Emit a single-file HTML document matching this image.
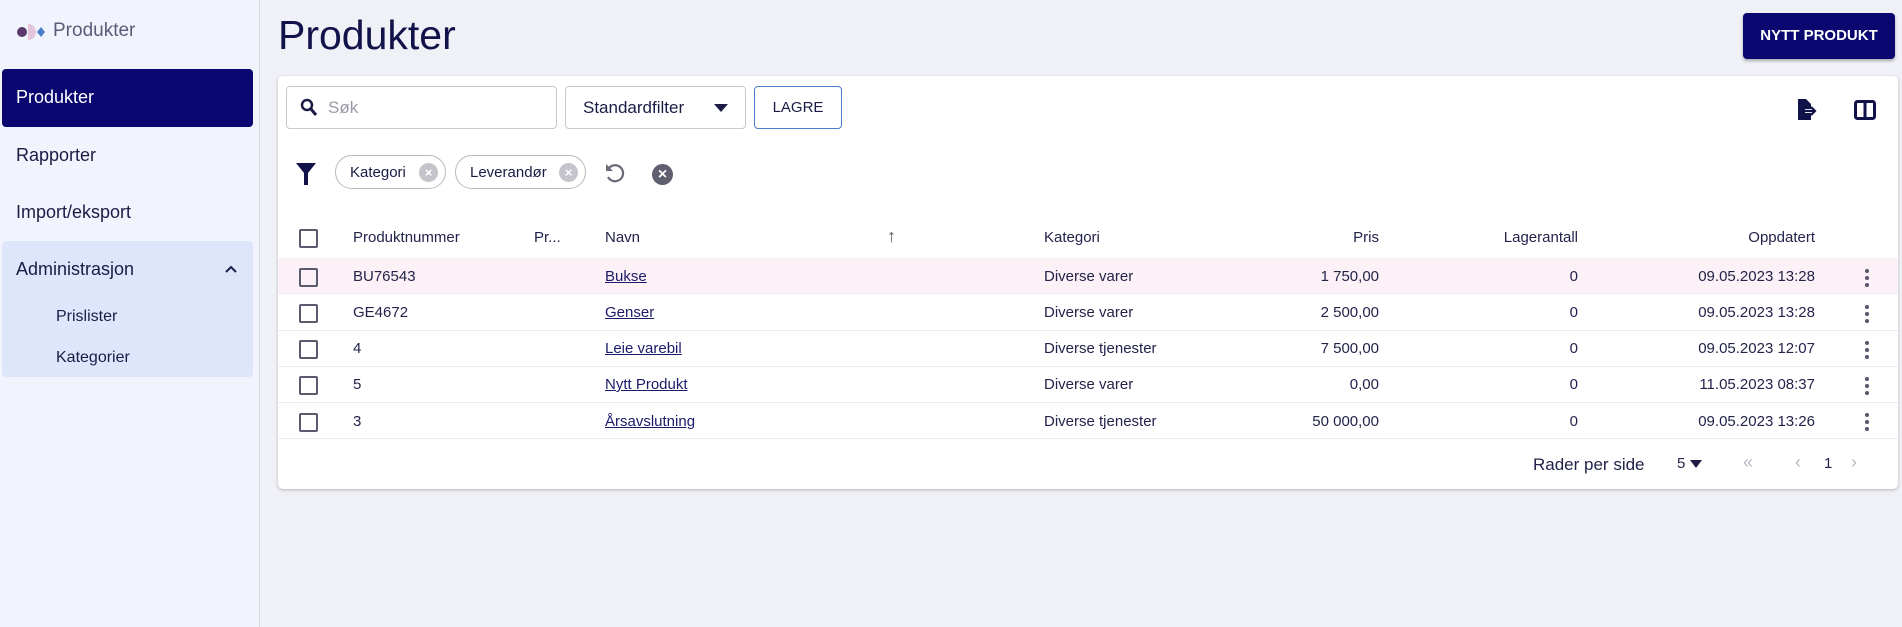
<!DOCTYPE html>
<html><head><meta charset="utf-8"><style>
*{box-sizing:border-box;margin:0;padding:0}
body{width:1902px;height:627px;overflow:hidden;background:#f0f1f7;font-family:"Liberation Sans",sans-serif;color:#1b1b45;position:relative}
.a{position:absolute}
.side{left:0;top:0;width:260px;height:627px;background:#f1f4fd;border-right:1px solid #d8dae6}
.nav{left:16px;font-size:18px;color:#1b1b45}
.card{left:278px;top:76px;width:1620px;height:413px;background:#fff;border-radius:5px;box-shadow:0 1px 3px rgba(0,0,0,.25)}
.t{font-size:15px;color:#23234a;white-space:nowrap}
.r{text-align:right}
.cb{width:19px;height:19px;border:2px solid #5a5a6e;border-radius:2px;left:299px}
.row{left:278px;width:1620px;height:36px;border-bottom:1px solid #ececf2}
.lnk{text-decoration:underline;color:#1b1b6a}
.dots{width:4px;left:1865px}
.dots i{display:block;width:4px;height:4px;border-radius:2px;background:#55556a;margin-bottom:3px}
.chip{height:34px;border:1px solid #b8b8c4;border-radius:17px;top:155px;font-size:15px;padding:8px 0 0 14px}
.chip b{position:absolute;right:7px;top:7px;width:19px;height:19px;border-radius:50%;background:#c4c4cc;color:#fff;font-size:13px;text-align:center;line-height:19px;font-weight:bold}
</style></head><body>
<div class="a side"></div>
<svg class="a" style="left:17px;top:23px" width="32" height="18"><circle cx="5" cy="9" r="5" fill="#5b3a6b"/><path d="M11 1 a8 8 0 0 1 0 16z" fill="#e4c5dc"/><path d="M24 4l4 5-4 5-4-5z" fill="#4a7fc9"/></svg>
<div class="a" style="left:53px;top:20px;font-size:19px;color:#5c5c78">Produkter</div>
<div class="a" style="left:2px;top:69px;width:251px;height:58px;background:#0a0770;border-radius:4px"></div>
<div class="a nav" style="top:87px;color:#fff">Produkter</div>
<div class="a nav" style="top:145px">Rapporter</div>
<div class="a nav" style="top:202px">Import/eksport</div>
<div class="a" style="left:2px;top:241px;width:251px;height:136px;background:#dde6fb;border-radius:4px"></div>
<div class="a nav" style="top:259px">Administrasjon</div>
<svg class="a" style="left:224px;top:264px" width="14" height="10"><path d="M2 8l5-5 5 5" stroke="#1b1b45" stroke-width="2" fill="none"/></svg>
<div class="a" style="left:56px;top:308px;font-size:16px">Prislister</div>
<div class="a" style="left:56px;top:349px;font-size:16px">Kategorier</div>

<div class="a" style="left:278px;top:12px;font-size:41px;color:#12124a">Produkter</div>
<div class="a" style="left:1743px;top:13px;width:152px;height:46px;background:#0a0770;border-radius:4px;color:#fff;font-weight:bold;font-size:15px;text-align:center;line-height:46px;box-shadow:0 2px 3px rgba(0,0,0,.3)">NYTT PRODUKT</div>

<div class="a card"></div>
<div class="a" style="left:286px;top:86px;width:271px;height:43px;border:1px solid #c8c8d0;border-radius:4px"></div>
<svg class="a" style="left:300px;top:98px" width="18" height="20"><circle cx="7" cy="7" r="5" stroke="#1b1b45" stroke-width="2.5" fill="none"/><path d="M11 11l5 6" stroke="#1b1b45" stroke-width="3"/></svg>
<div class="a" style="left:328px;top:98px;font-size:17px;color:#9a9aa8">Søk</div>
<div class="a" style="left:565px;top:86px;width:181px;height:43px;border:1px solid #c8c8d0;border-radius:4px"></div>
<div class="a" style="left:583px;top:98px;font-size:17px">Standardfilter</div>
<svg class="a" style="left:714px;top:104px" width="14" height="8"><path d="M0 0h14l-7 8z" fill="#1b1b45"/></svg>
<div class="a" style="left:754px;top:86px;width:88px;height:43px;border:1px solid #4a7fc9;border-radius:4px;font-size:15px;text-align:center;line-height:41px">LAGRE</div>
<svg class="a" style="left:1796px;top:98px" width="24" height="24"><path d="M2 1h8l5 5v5h-6v4h6v7H2z" fill="#12124a"/><path d="M9 13h9m-3-4l4 4-4 4" stroke="#12124a" stroke-width="2.2" fill="none"/></svg>
<svg class="a" style="left:1854px;top:100px" width="22" height="20"><rect x="1.5" y="1.5" width="19" height="17" rx="2" stroke="#12124a" stroke-width="3" fill="none"/><path d="M11 2v16" stroke="#12124a" stroke-width="3"/></svg>

<svg class="a" style="left:295px;top:162px" width="22" height="24"><path d="M1 1h20l-8 10v12h-4V11z" fill="#12124a"/></svg>
<div class="a chip" style="left:335px;width:111px">Kategori<b>×</b></div>
<div class="a chip" style="left:455px;width:131px">Leverandør<b>×</b></div>
<svg class="a" style="left:603px;top:161px" width="24" height="24"><path d="M6 7a8 8 0 1 1-1 9" stroke="#6a6a78" stroke-width="2.2" fill="none"/><path d="M3 3v7h7z" fill="#6a6a78"/></svg>
<div class="a" style="left:652px;top:164px;width:21px;height:21px;border-radius:50%;background:#5f5f70;color:#fff;font-weight:bold;font-size:16px;text-align:center;line-height:21px">×</div>

<div class="a cb" style="top:229px"></div>
<div class="a t" style="left:353px;top:229px">Produktnummer</div>
<div class="a t" style="left:534px;top:229px">Pr...</div>
<div class="a t" style="left:605px;top:229px">Navn</div>
<div class="a t" style="left:887px;top:226px;font-size:18px;color:#555">↑</div>
<div class="a t" style="left:1044px;top:229px">Kategori</div>
<div class="a t r" style="left:1279px;width:100px;top:229px">Pris</div>
<div class="a t r" style="left:1478px;width:100px;top:229px">Lagerantall</div>
<div class="a t r" style="left:1715px;width:100px;top:229px">Oppdatert</div>

<div class="a row" style="top:258px;background:#fcf1f6"></div>
<div class="a row" style="top:295px"></div>
<div class="a row" style="top:331px"></div>
<div class="a row" style="top:367px"></div>
<div class="a row" style="top:403px"></div>

<div class="a cb" style="top:268px"></div><div class="a t" style="left:353px;top:268px">BU76543</div><div class="a t lnk" style="left:605px;top:268px">Bukse</div><div class="a t" style="left:1044px;top:268px">Diverse varer</div><div class="a t r" style="left:1279px;width:100px;top:268px">1 750,00</div><div class="a t r" style="left:1478px;width:100px;top:268px">0</div><div class="a t r" style="left:1665px;width:150px;top:268px">09.05.2023 13:28</div><div class="a dots" style="top:269px"><i></i><i></i><i></i></div>
<div class="a cb" style="top:304px"></div><div class="a t" style="left:353px;top:304px">GE4672</div><div class="a t lnk" style="left:605px;top:304px">Genser</div><div class="a t" style="left:1044px;top:304px">Diverse varer</div><div class="a t r" style="left:1279px;width:100px;top:304px">2 500,00</div><div class="a t r" style="left:1478px;width:100px;top:304px">0</div><div class="a t r" style="left:1665px;width:150px;top:304px">09.05.2023 13:28</div><div class="a dots" style="top:305px"><i></i><i></i><i></i></div>
<div class="a cb" style="top:340px"></div><div class="a t" style="left:353px;top:340px">4</div><div class="a t lnk" style="left:605px;top:340px">Leie varebil</div><div class="a t" style="left:1044px;top:340px">Diverse tjenester</div><div class="a t r" style="left:1279px;width:100px;top:340px">7 500,00</div><div class="a t r" style="left:1478px;width:100px;top:340px">0</div><div class="a t r" style="left:1665px;width:150px;top:340px">09.05.2023 12:07</div><div class="a dots" style="top:341px"><i></i><i></i><i></i></div>
<div class="a cb" style="top:376px"></div><div class="a t" style="left:353px;top:376px">5</div><div class="a t lnk" style="left:605px;top:376px">Nytt Produkt</div><div class="a t" style="left:1044px;top:376px">Diverse varer</div><div class="a t r" style="left:1279px;width:100px;top:376px">0,00</div><div class="a t r" style="left:1478px;width:100px;top:376px">0</div><div class="a t r" style="left:1665px;width:150px;top:376px">11.05.2023 08:37</div><div class="a dots" style="top:377px"><i></i><i></i><i></i></div>
<div class="a cb" style="top:413px"></div><div class="a t" style="left:353px;top:413px">3</div><div class="a t lnk" style="left:605px;top:413px">Årsavslutning</div><div class="a t" style="left:1044px;top:413px">Diverse tjenester</div><div class="a t r" style="left:1279px;width:100px;top:413px">50 000,00</div><div class="a t r" style="left:1478px;width:100px;top:413px">0</div><div class="a t r" style="left:1665px;width:150px;top:413px">09.05.2023 13:26</div><div class="a dots" style="top:413px"><i></i><i></i><i></i></div>

<div class="a t" style="left:1533px;top:455px;font-size:17px">Rader per side</div>
<div class="a t" style="left:1677px;top:455px">5</div>
<svg class="a" style="left:1690px;top:460px" width="12" height="8"><path d="M0 0h12l-6 8z" fill="#1b1b45"/></svg>
<div class="a t" style="left:1743px;top:452px;font-size:18px;color:#b8b8c4">«</div>
<div class="a t" style="left:1795px;top:452px;font-size:18px;color:#b8b8c4">‹</div>
<div class="a t" style="left:1824px;top:455px">1</div>
<div class="a t" style="left:1851px;top:452px;font-size:18px;color:#b8b8c4">›</div>
</body></html>
